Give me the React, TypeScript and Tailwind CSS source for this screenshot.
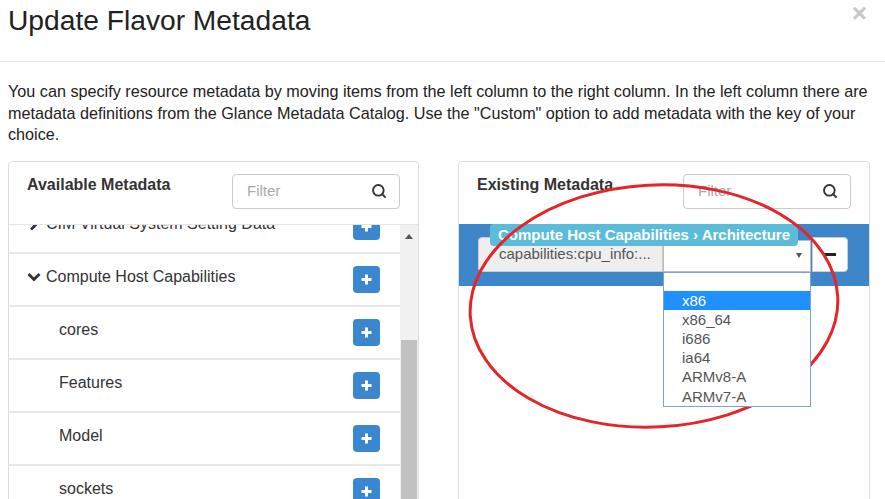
import { Search } from "lucide-react";

const rows = [
    { label: "CIM Virtual System Setting Data", level: 0, icon: "right" },
    { label: "Compute Host Capabilities", level: 0, icon: "down" },
    { label: "cores", level: 1 },
    { label: "Features", level: 1 },
    { label: "Model", level: 1 },
    { label: "sockets", level: 1 },
    { label: "Topology", level: 1 },
];

const options = ["x86", "x86_64", "i686", "ia64", "ARMv8-A", "ARMv7-A"];

function PlusButton() {
    return (
        <div className="w-[27px] h-[27px] rounded-[4px] bg-[#3a86cf] flex items-center justify-center">
            <svg width="13" height="13" viewBox="0 0 13 13">
                <path d="M6.5 1.5v10M1.5 6.5h10" stroke="white" strokeWidth="3" />
            </svg>
        </div>
    );
}

function FilterBox() {
    return (
        <div className="w-[168px] h-[35px] border border-[#ccc] rounded-[4px] flex items-center justify-between pl-[14px] pr-[12px] bg-white">
            <span className="text-[15px] text-[#aaa]">Filter</span>
            <Search size={16} strokeWidth={2.8} className="text-[#333]" />
        </div>
    );
}

function Chevron({ dir }: { dir: string }) {
    return (
        <svg width="14" height="14" viewBox="0 0 14 14" className="mr-[5px]">
            {dir === "down" ? (
                <path d="M1.5 4l5.5 5.5 5.5-5.5" stroke="#333" strokeWidth="2.8" fill="none" />
            ) : (
                <path d="M4 1.5l5.5 5.5-5.5 5.5" stroke="#333" strokeWidth="2.8" fill="none" />
            )}
        </svg>
    );
}

export default function App() {
    return (
        <div
            className="relative w-[885px] h-[499px] overflow-hidden bg-white text-[#333]"
            style={{ fontFamily: '"Liberation Sans", Arial, sans-serif' }}
        >
            {/* Modal header */}
            <div className="h-[62px] border-b border-[#e5e5e5] flex items-start justify-between pl-[8px] pr-[18px]">
                <h1 className="text-[28.2px] leading-[30px] mt-[5px] text-[#222]">Update Flavor Metadata</h1>
                <span className="text-[26px] leading-[30px] mt-[-2px] font-bold text-[#c8c8c8]">×</span>
            </div>

            <div className="px-[8px]">
                <p className="mt-[19px] text-[16.2px] leading-[21.5px] text-[#222]">
                    You can specify resource metadata by moving items from the left column to the right column. In the left column there are metadata definitions from the Glance Metadata Catalog. Use the "Custom" option to add metadata with the key of your choice.
                </p>

                <div className="mt-[15px] grid grid-cols-[411px_412px] gap-[39px]">
                    {/* Available */}
                    <div className="border border-[#ddd] rounded-[4px] h-[400px] flex flex-col">
                        <div className="h-[62px] flex items-start justify-between pl-[18px] pr-[18px] pt-[12px] shrink-0">
                            <span className="text-[16px] font-bold mt-[-1px]">Available Metadata</span>
                            <FilterBox />
                        </div>
                        <div className="flex flex-1 overflow-hidden border-t border-[#e5e5e5]">
                            <div className="flex-1 overflow-hidden">
                                <div className="mt-[-24px]">
                                    {rows.map((r) => (
                                        <div
                                            key={r.label}
                                            className="h-[53px] border-b-2 border-[#e8e8e8] flex items-center justify-between pr-[20px]"
                                        >
                                            <div
                                                className={`flex items-center text-[16px] mt-[-4px] ${r.level === 1 ? "pl-[50px]" : "pl-[18px]"}`}
                                            >
                                                {r.icon && <Chevron dir={r.icon} />}
                                                {r.label}
                                            </div>
                                            <PlusButton />
                                        </div>
                                    ))}
                                </div>
                            </div>
                            <div className="w-[18px] bg-[#f1f1f1] flex flex-col items-center shrink-0">
                                <div className="h-[115px] w-full flex justify-center pt-[9px]">
                                    <div className="w-0 h-0 border-l-[4px] border-r-[4px] border-b-[5px] border-l-transparent border-r-transparent border-b-[#555]" />
                                </div>
                                <div className="flex-1 w-[16px] bg-[#c1c1c1]" />
                            </div>
                        </div>
                    </div>

                    {/* Existing */}
                    <div className="border border-[#ddd] rounded-[4px] h-[400px] flex flex-col">
                        <div className="h-[62px] flex items-start justify-between pl-[18px] pr-[18px] pt-[12px] shrink-0">
                            <span className="text-[16px] font-bold mt-[-1px]">Existing Metadata</span>
                            <FilterBox />
                        </div>
                        <div className="relative h-[62px] bg-[#3d86c9] flex items-center pl-[19px] pr-[20px]">
                            <div className="relative w-[185px] h-[35px] bg-[#eee] border border-[#ccc] rounded-l-[4px] flex items-center pl-[20px] text-[15px] text-[#555] mt-[-1px]">
                                capabilities:cpu_info:...
                            </div>
                            <div className="relative w-[148px] h-[32px] bg-white border border-[#bbb] flex items-center justify-end pr-[8px] mt-[2px]">
                                <div className="w-0 h-0 border-l-[3px] border-r-[3px] border-t-[5px] border-l-transparent border-r-transparent border-t-[#555]" />
                                <div className="absolute left-[-1px] top-[31px] w-[148px] border border-[#7f9fd6] bg-white text-[15px] leading-[19.2px] z-10">
                                    <div className="h-[18px]" />
                                    {options.map((o, i) => (
                                        <div
                                            key={o}
                                            className={`pl-[18px] ${i === 0 ? "bg-[#1e90ff] text-white" : "text-[#555]"}`}
                                        >
                                            {o}
                                        </div>
                                    ))}
                                </div>
                            </div>
                            <div className="w-[36px] h-[35px] bg-white border border-[#ccc] rounded-r-[4px] flex items-center justify-center ml-[1px] mt-[-1px]">
                                <div className="w-[12px] h-[3px] bg-[#222]" />
                            </div>
                            <div className="absolute left-[31px] top-0 h-[22px] px-[8px] bg-[#5bbcd9] rounded-[4px] text-white font-bold text-[15px] leading-[22px]">
                                Compute Host Capabilities › Architecture
                            </div>
                        </div>
                    </div>
                </div>
            </div>

            {/* Red annotation ellipse */}
            <svg className="absolute inset-0 pointer-events-none" width="885" height="499">
                <ellipse
                    cx="654"
                    cy="306"
                    rx="184"
                    ry="121"
                    transform="rotate(-3 654 306)"
                    fill="none"
                    stroke="#e4262c"
                    strokeWidth="3"
                />
            </svg>
        </div>
    );
}
